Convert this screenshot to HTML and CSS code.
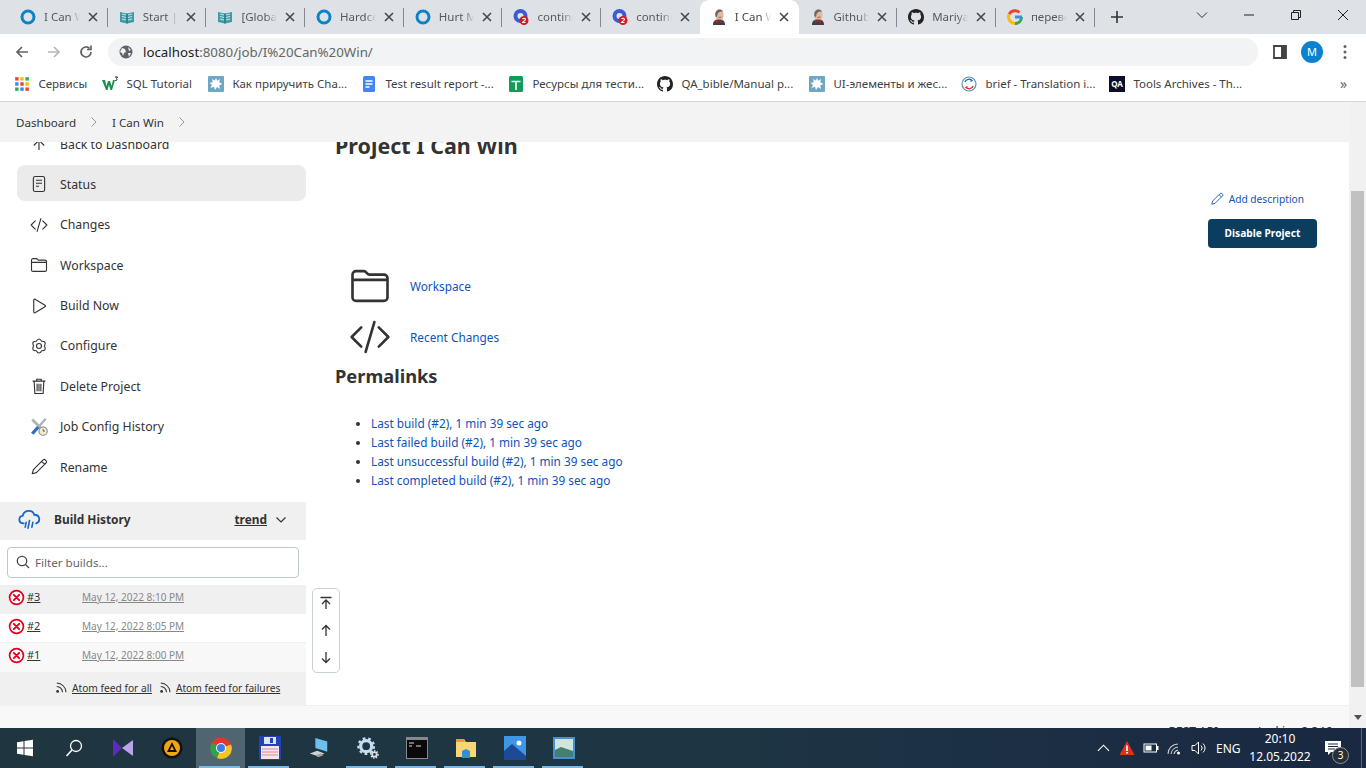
FILE: index.html
```html
<!DOCTYPE html>
<html lang="en">
  <head>
    <meta charset="UTF-8" />
    <title>I Can Win [Jenkins]</title>
    <link rel="stylesheet" href="styles.css">
  </head>
  <body>
    <svg class="sprite">
      <symbol id="ring" viewBox="0 0 16 16"><circle cx="8" cy="8" r="6" fill="none" stroke="#0a84c6" stroke-width="3"/></symbol>
      <symbol id="book" viewBox="0 0 16 16"><path d="M1 3l7 1.500L15 3v10l-7 1.500L1 13z" fill="#3f9aa8"/><path d="M3 5l4 1M3 7.500l4 1M3 10l4 1M13 5l-4 1M13 7.500l-4 1M13 10l-4 1" stroke="#cfe8ea" stroke-width="1"/><path d="M8 4.500v10" stroke="#1f6d78"/></symbol>
      <symbol id="contin" viewBox="0 0 16 16"><circle cx="7.500" cy="7" r="7" fill="#3b5bd6"/><circle cx="7.500" cy="7" r="3" fill="#dfe6fb"/><circle cx="11" cy="11.500" r="4.500" fill="#e0141e"/><path d="M9.500 10c.8-1 3-.8 3 .5 0 1-2.500 2-3 3h3" fill="none" stroke="#fff" stroke-width="1.100"/></symbol>
      <symbol id="jenkins" viewBox="0 0 16 16"><path d="M4.500 7c-.6-4 1.200-6.500 4-6.500S13 3 12.500 7l-.7 3.500H5z" fill="#e3b9a0"/><path d="M4.500 7.500C3.500 2.500 6 .2 9 .5 10.500.7 11.500 1.500 12 2.500 9.500 2 7 3 6.500 5.500L6 8z" fill="#6d6a69"/><path d="M7.500 8.500l3-.5" stroke="#9c6a55"/><path d="M2 16c0-4 1.800-5.500 6-5.500s6 1.500 6 5.500z" fill="#3a3f4a"/><path d="M5 10.800L8 12.300l3-1.500v3L8 12.800l-3 1z" fill="#c2211e"/></symbol>
      <symbol id="octo" viewBox="0 0 16 16"><path d="M8 0C3.580 0 0 3.580 0 8c0 3.540 2.290 6.530 5.470 7.590.4.07.55-.17.55-.38 0-.19-.01-.82-.01-1.490-2.010.37-2.530-.49-2.690-.94-.09-.23-.48-.94-.82-1.130-.28-.15-.68-.52-.01-.53.63-.01 1.080.58 1.230.82.72 1.210 1.870.87 2.330.66.07-.52.28-.87.51-1.070-1.780-.2-3.640-.89-3.640-3.950 0-.87.31-1.590.82-2.150-.08-.2-.36-1.020.08-2.120 0 0 .67-.21 2.200.82.64-.18 1.320-.27 2-.27.68 0 1.360.09 2 .27 1.530-1.040 2.200-.82 2.200-.82.44 1.100.16 1.920.08 2.120.51.56.82 1.270.82 2.150 0 3.070-1.870 3.750-3.650 3.950.29.25.54.73.54 1.480 0 1.070-.01 1.930-.01 2.200 0 .21.15.46.55.38A8.013 8.013 0 0016 8c0-4.420-3.580-8-8-8z" fill="#222"/></symbol>
      <symbol id="google" viewBox="0 0 16 16"><path d="M14.500 8c0 3.800-2.700 6.500-6.500 6.500" fill="none" stroke="#34a853" stroke-width="3"/><path d="M8 14.500A6.500 6.500 0 0 1 2.300 5" fill="none" stroke="#fbbc05" stroke-width="3"/><path d="M2.300 5A6.500 6.500 0 0 1 12.500 3.500" fill="none" stroke="#ea4335" stroke-width="3"/><path d="M8 8h7" stroke="#4285f4" stroke-width="3"/></symbol>
      <symbol id="splat" viewBox="0 0 16 16"><rect width="16" height="16" rx="1" fill="#6ea6c4"/><path d="M8 2l1.200 2.800L12 3l-.8 3.200L14.500 8l-3.300 1.300.8 3.700-3-2L7 14l-1-3.300L2.500 12l1.500-3.200L1.500 7l3.200-.8L4 3l2.800 1.500z" fill="#fff"/></symbol>
      <symbol id="close" viewBox="0 0 10 10"><path d="M1 1l8 8M9 1l-8 8" stroke="#45484c" stroke-width="1.600"/></symbol>
      <symbol id="folder" viewBox="0 0 24 24"><path d="M2 18.500V5.500A2 2 0 0 1 4 3.500h4.500c1.500 0 1.700 2 3.200 2H20a2 2 0 0 1 2 2v11a2 2 0 0 1-2 2H4a2 2 0 0 1-2-2zM2 8.500h20" fill="none" stroke="#333" stroke-width="1.500" stroke-linejoin="round"/></symbol>
      <symbol id="code" viewBox="0 0 24 24"><path d="M7 6.500L1.500 12 7 17.500M17 6.500l5.500 5.500-5.500 5.500M14.500 3.500l-5 17" fill="none" stroke="#333" stroke-width="1.500" stroke-linecap="round" stroke-linejoin="round"/></symbol>
      <symbol id="pencil" viewBox="0 0 24 24"><path d="M3 21l1.500-5.500L17.500 2.500a2 2 0 0 1 2.800 0l1.200 1.200a2 2 0 0 1 0 2.800L8.500 19.500zM15.500 4.500l4 4" fill="none" stroke="currentColor" stroke-width="1.500" stroke-linejoin="round"/></symbol>
      <symbol id="failed" viewBox="0 0 16 16"><circle cx="8" cy="8" r="6.500" fill="#fff" stroke="#e6001f" stroke-width="1.600"/><path d="M5.500 5.500l5 5M10.500 5.500l-5 5" stroke="#e6001f" stroke-width="1.800" stroke-linecap="round"/></symbol>
      <symbol id="rss" viewBox="0 0 16 16"><circle cx="3" cy="13" r="1.600" fill="#333"/><path d="M2 7.500a6.500 6.500 0 0 1 6.500 6.500M2 3.500A10.500 10.500 0 0 1 12.500 14" fill="none" stroke="#333" stroke-width="1.200"/></symbol>
    </svg>

    <div class="tabs">
      <div class="tab"><svg class="fav"><use href="#ring"/></svg><span class="tab-title">I Can Win</span><svg class="tab-close"><use href="#close"/></svg></div>
      <div class="tab"><svg class="fav"><use href="#book"/></svg><span class="tab-title">Start | IDE</span><svg class="tab-close"><use href="#close"/></svg></div>
      <div class="tab"><svg class="fav"><use href="#book"/></svg><span class="tab-title">[Global</span><svg class="tab-close"><use href="#close"/></svg></div>
      <div class="tab"><svg class="fav"><use href="#ring"/></svg><span class="tab-title">Hardcore</span><svg class="tab-close"><use href="#close"/></svg></div>
      <div class="tab"><svg class="fav"><use href="#ring"/></svg><span class="tab-title">Hurt Me</span><svg class="tab-close"><use href="#close"/></svg></div>
      <div class="tab"><svg class="fav"><use href="#contin"/></svg><span class="tab-title">continue</span><svg class="tab-close"><use href="#close"/></svg></div>
      <div class="tab tab-noline"><svg class="fav"><use href="#contin"/></svg><span class="tab-title">continue</span><svg class="tab-close"><use href="#close"/></svg></div>
      <div class="tab tab-active tab-noline"><svg class="fav"><use href="#jenkins"/></svg><span class="tab-title">I Can Win</span><svg class="tab-close"><use href="#close"/></svg></div>
      <div class="tab"><svg class="fav"><use href="#jenkins"/></svg><span class="tab-title">Github</span><svg class="tab-close"><use href="#close"/></svg></div>
      <div class="tab"><svg class="fav"><use href="#octo"/></svg><span class="tab-title">Mariya</span><svg class="tab-close"><use href="#close"/></svg></div>
      <div class="tab"><svg class="fav"><use href="#google"/></svg><span class="tab-title">перевод</span><svg class="tab-close"><use href="#close"/></svg></div>
      <svg class="new-tab" viewBox="0 0 14 14"><path d="M7 1v12M1 7h12" stroke="#333" stroke-width="1.600"/></svg>
      <div class="win-controls">
        <svg viewBox="0 0 12 12"><path d="M1 3.500l5 5 5-5" fill="none" stroke="#333"/></svg>
        <svg viewBox="0 0 12 12"><path d="M1 6h10" stroke="#222"/></svg>
        <svg viewBox="0 0 12 12"><path d="M1.500 3.500h7v7h-7zM3.500 3.500v-2h7v7h-2" fill="none" stroke="#222"/></svg>
        <svg viewBox="0 0 12 12"><path d="M1 1l10 10M11 1L1 11" stroke="#222"/></svg>
      </div>
    </div>

    <div class="toolbar">
      <svg class="nav-icon" viewBox="0 0 16 16"><path d="M14 8H3M8 3L3 8l5 5" fill="none" stroke="#5f6368" stroke-width="1.700"/></svg>
      <svg class="nav-icon" viewBox="0 0 16 16"><path d="M2 8h11M8 3l5 5-5 5" fill="none" stroke="#b4b7bb" stroke-width="1.700"/></svg>
      <svg class="nav-icon" viewBox="0 0 16 16"><path d="M13 8a5 5 0 1 1-1.500-3.600M13 1.500v4H9" fill="none" stroke="#5f6368" stroke-width="1.700"/></svg>
      <div class="omnibox">
        <svg class="globe" viewBox="0 0 14 14"><circle cx="7" cy="7" r="6.500" fill="#5f6368"/><path d="M3 3l3 1 1 3-2 1-1 3-1-3-2-1zM9 2l3 3-2 1zM9 8l3 0-2 4z" fill="#f1f3f4"/></svg>
        <span class="url"><b>localhost</b>:8080/job/I%20Can%20Win/</span>
      </div>
      <svg class="panel-icon" viewBox="0 0 14 14"><path d="M1 1h12v12H1z" fill="none" stroke="#444" stroke-width="1.800"/><path d="M8 1h5v12H8z" fill="#444"/></svg>
      <span class="avatar">M</span>
      <svg class="dots" viewBox="0 0 4 16"><circle cx="2" cy="2.500" r="1.500" fill="#5f6368"/><circle cx="2" cy="8" r="1.500" fill="#5f6368"/><circle cx="2" cy="13.500" r="1.500" fill="#5f6368"/></svg>
    </div>

    <div class="bookmarks">
      <div class="bm">
        <svg class="fav" viewBox="0 0 14 14"><path d="M1 1h3v3H1z" fill="#ea4335"/><path d="M5.500 1h3v3h-3z" fill="#fbbc05"/><path d="M10 1h3v3h-3z" fill="#34a853"/><path d="M1 5.500h3v3H1z" fill="#4285f4"/><path d="M5.500 5.500h3v3h-3z" fill="#ea4335"/><path d="M10 5.500h3v3h-3z" fill="#fbbc05"/><path d="M1 10h3v3H1z" fill="#34a853"/><path d="M5.500 10h3v3h-3z" fill="#4285f4"/><path d="M10 10h3v3h-3z" fill="#ea4335"/></svg>
        <span>Сервисы</span>
      </div>
      <div class="bm">
        <svg class="fav" viewBox="0 0 16 16"><path d="M0 4h3l1.500 6L6 5h2l1.500 5L11 4h2l-3 10H8.500L7 9l-1.500 5H4z" fill="#1b8f4d"/><path d="M13 1h2.500l-1 1.500c1 .5.5 2.500-1.200 2" fill="none" stroke="#222"/></svg>
        <span>SQL Tutorial</span>
      </div>
      <div class="bm"><svg class="fav"><use href="#splat"/></svg><span>Как приручить Cha...</span></div>
      <div class="bm">
        <svg class="fav" viewBox="0 0 16 16"><rect x="2" width="12" height="16" rx="1.500" fill="#4285f4"/><path d="M4.500 5h7M4.500 8h7M4.500 11h4" stroke="#fff" stroke-width="1.300"/></svg>
        <span>Test result report -...</span>
      </div>
      <div class="bm">
        <svg class="fav" viewBox="0 0 16 16"><rect x="1" width="14" height="16" rx="1.500" fill="#0f9d58"/><path d="M3.500 5.500h9M8 5.500V14" stroke="#fff" stroke-width="1.600"/></svg>
        <span>Ресурсы для тести...</span>
      </div>
      <div class="bm"><svg class="fav"><use href="#octo"/></svg><span>QA_bible/Manual p...</span></div>
      <div class="bm"><svg class="fav"><use href="#splat"/></svg><span>UI-элементы и жес...</span></div>
      <div class="bm">
        <svg class="fav" viewBox="0 0 16 16"><circle cx="8" cy="8" r="7" fill="#fff" stroke="#6d8ca8" stroke-width="1.200"/><path d="M4 6c1-3 5-3.500 7-1.500l-1.500 1" fill="none" stroke="#1f74c4" stroke-width="1.500"/><path d="M12 10c-1 3-5 3.500-7 1.500l1.500-1" fill="none" stroke="#e0352b" stroke-width="1.500"/></svg>
        <span>brief - Translation i...</span>
      </div>
      <div class="bm">
        <svg class="fav" viewBox="0 0 16 16"><rect width="16" height="16" fill="#0b0d2a"/><text x="8" y="11" class="qa-mark">QA</text></svg>
        <span>Tools Archives - Th...</span>
      </div>
      <span class="bm-more">»</span>
    </div>

    <div class="page">
      <div class="view">
        <div class="crumbs">
          <span>Dashboard</span>
          <svg class="crumb-sep" viewBox="0 0 8 12"><path d="M1.500 1.500L6 6l-4.500 4.500" fill="none" stroke="#999"/></svg>
          <span>I Can Win</span>
          <svg class="crumb-sep" viewBox="0 0 8 12"><path d="M1.500 1.500L6 6l-4.500 4.500" fill="none" stroke="#999"/></svg>
        </div>

        <div class="content">
          <aside class="sidebar">
            <div class="tasks">
              <div class="task">
                <svg class="task-icon" viewBox="0 0 24 24"><path d="M12 4v16M5 14l7-7 7 7" fill="none" stroke="#333" stroke-width="1.500"/></svg>
                <span>Back to Dashboard</span>
              </div>
              <div class="task task-current">
                <svg class="task-icon" viewBox="0 0 24 24"><rect x="4.500" y="2" width="15" height="20" rx="2.500" fill="none" stroke="#333" stroke-width="1.500"/><path d="M8 7h8M8 11h8M8 15h4" stroke="#333" stroke-width="1.500"/></svg>
                <span>Status</span>
              </div>
              <div class="task"><svg class="task-icon"><use href="#code"/></svg><span>Changes</span></div>
              <div class="task"><svg class="task-icon"><use href="#folder"/></svg><span>Workspace</span></div>
              <div class="task">
                <svg class="task-icon" viewBox="0 0 24 24"><path d="M5 4.500c0-1.500 1-2 2.300-1.300L20 11c1 .6 1 1.400 0 2L7.300 20.800C6 21.500 5 21 5 19.500z" fill="none" stroke="#333" stroke-width="1.500"/></svg>
                <span>Build Now</span>
              </div>
              <div class="task">
                <svg class="task-icon" viewBox="0 0 24 24"><path d="M8.350 5.680Q12-.5 15.650 5.680Q22.500 5.500 19.300 12Q22.500 18.500 15.650 18.320Q12 24.500 8.350 18.320Q1.500 18.500 4.700 12Q1.500 5.500 8.350 5.680z" fill="none" stroke="#333" stroke-width="1.500" stroke-linejoin="round"/><circle cx="12" cy="12" r="3.300" fill="none" stroke="#333" stroke-width="1.500"/></svg>
                <span>Configure</span>
              </div>
              <div class="task">
                <svg class="task-icon" viewBox="0 0 24 24"><path d="M3.500 5.500h17M9 5V3h6v2M5.500 5.500l1 16.500h11l1-16.500M9.500 9v10M12 9v10M14.500 9v10" fill="none" stroke="#333" stroke-width="1.500"/></svg>
                <span>Delete Project</span>
              </div>
              <div class="task">
                <svg class="task-icon" viewBox="0 0 24 24"><path d="M3 2l14 14" stroke="#a8b2ba" stroke-width="3.500"/><path d="M21 1l-8 9" stroke="#a8b2ba" stroke-width="3"/><path d="M11 12l-8 9" stroke="#2f6fc0" stroke-width="4.500"/><circle cx="17.500" cy="17.500" r="5.500" fill="#f5ecd0" stroke="#8c8c8c" stroke-width="1.500"/><path d="M17.500 14.500v3h2.500" fill="none" stroke="#555" stroke-width="1.200"/></svg>
                <span>Job Config History</span>
              </div>
              <div class="task"><svg class="task-icon task-pencil"><use href="#pencil"/></svg><span>Rename</span></div>
            </div>

            <div class="history-head">
              <svg class="cloud" viewBox="0 0 24 22"><path d="M6 15c-6 0-6-7-1-8C6 1 15 0 17 6c6 0 7 7 2 9" fill="none" stroke="#1469c7" stroke-width="1.900" stroke-linecap="round"/><path d="M8.500 14l-1 5M12 12l-1.500 8M15.500 14l-1 5" stroke="#1469c7" stroke-width="1.700" stroke-linecap="round"/></svg>
              <span class="history-title">Build History</span>
              <a class="trend">trend</a>
              <svg class="chev" viewBox="0 0 12 8"><path d="M1.500 1.500L6 6l4.500-4.500" fill="none" stroke="#333" stroke-width="1.200"/></svg>
            </div>
            <div class="filter-wrap">
              <div class="filter">
                <svg viewBox="0 0 14 14"><circle cx="6" cy="6" r="4.700" fill="none" stroke="#444" stroke-width="1.300"/><path d="M9.500 9.500L13 13" stroke="#444" stroke-width="1.300"/></svg>
                <span>Filter builds...</span>
              </div>
            </div>
            <div class="build build-a"><svg class="build-icon"><use href="#failed"/></svg><a class="build-no">#3</a><a class="build-date">May 12, 2022 8:10 PM</a></div>
            <div class="build build-b"><svg class="build-icon"><use href="#failed"/></svg><a class="build-no">#2</a><a class="build-date">May 12, 2022 8:05 PM</a></div>
            <div class="build build-c"><svg class="build-icon"><use href="#failed"/></svg><a class="build-no">#1</a><a class="build-date">May 12, 2022 8:00 PM</a></div>
            <div class="feeds">
              <svg><use href="#rss"/></svg><a>Atom feed for all</a>
              <svg class="feed-second"><use href="#rss"/></svg><a>Atom feed for failures</a>
            </div>
          </aside>

          <main class="main">
            <h1>Project I Can Win</h1>
            <div class="actions">
              <a class="add-desc"><svg><use href="#pencil"/></svg>Add description</a>
              <button class="disable-btn">Disable Project</button>
            </div>
            <div class="big-link"><svg><use href="#folder"/></svg><a>Workspace</a></div>
            <div class="big-link"><svg><use href="#code"/></svg><a>Recent Changes</a></div>
            <h2>Permalinks</h2>
            <ul class="permalinks">
              <li><a>Last build (#2), 1 min 39 sec ago</a></li>
              <li><a>Last failed build (#2), 1 min 39 sec ago</a></li>
              <li><a>Last unsuccessful build (#2), 1 min 39 sec ago</a></li>
              <li><a>Last completed build (#2), 1 min 39 sec ago</a></li>
            </ul>
          </main>

          <div class="scroll-tool">
            <svg viewBox="0 0 14 14"><path d="M1.500 1.500h11M7 13V4M3 8l4-4 4 4" fill="none" stroke="#333" stroke-width="1.300"/></svg>
            <svg viewBox="0 0 14 14"><path d="M7 13V2.500M3 6.500l4-4 4 4" fill="none" stroke="#333" stroke-width="1.300"/></svg>
            <svg viewBox="0 0 14 14"><path d="M7 1v10.500M3 7.500l4 4 4-4" fill="none" stroke="#333" stroke-width="1.300"/></svg>
          </div>
        </div>

        <div class="page-foot"><span>REST API</span><span>Jenkins 2.346</span></div>
      </div>

      <div class="scrollbar">
        <div class="thumb"></div>
        <svg class="scroll-arrow" viewBox="0 0 8 5"><path d="M0 0h8L4 5z" fill="#505050"/></svg>
      </div>
    </div>

    <div class="taskbar">
      <div class="task-btn">
        <svg viewBox="0 0 18 18"><path d="M1 3.200l6.500-1v6.300H1zM8.500 2l8.500-1.300v7.800H8.500zM1 9.500h6.500v6.300l-6.500-1zM8.500 9.500H17v7.800L8.500 16z" fill="#fff"/></svg>
      </div>
      <div class="task-btn">
        <svg viewBox="0 0 18 18"><circle cx="11" cy="7" r="5.500" fill="none" stroke="#fff" stroke-width="1.300"/><path d="M7 11l-5.500 6" stroke="#fff" stroke-width="1.500"/></svg>
      </div>
      <div class="task-btn">
        <svg class="task-lg" viewBox="0 0 22 22"><path d="M1 2l9 9-9 9z" fill="#5b2bc0"/><path d="M21 3l-11 8 11 8z" fill="#b9a3ea"/></svg>
      </div>
      <div class="task-btn">
        <svg class="task-lg" viewBox="0 0 22 22"><circle cx="11" cy="11" r="10.500" fill="#111"/><circle cx="11" cy="11" r="8" fill="#f3a60f"/><path d="M11 5l5 10H6zM11 9l-2 4h4z" fill="#111" fill-rule="evenodd"/></svg>
      </div>
      <div class="task-btn task-btn-active task-btn-open">
        <svg class="task-lg" viewBox="0 0 22 22"><circle cx="11" cy="11" r="10.500" fill="#e0392b"/><path d="M11 11L2 5.500A10.500 10.500 0 0 0 7 21z" fill="#2fa24a"/><path d="M11 11l-4 10A10.500 10.500 0 0 0 21 7.500z" fill="#f7c325"/><circle cx="11" cy="11" r="5" fill="#fff"/><circle cx="11" cy="11" r="4" fill="#3b7de8"/></svg>
      </div>
      <div class="task-btn task-btn-open">
        <svg class="task-lg" viewBox="0 0 22 24"><rect width="22" height="24" rx="1" fill="#2242b8"/><rect x="5" y="1" width="12" height="7" fill="#dfe4ee"/><rect x="11" y="2" width="3" height="5" fill="#2242b8"/><rect x="2" y="10" width="18" height="13" fill="#f4e6e6"/><path d="M3 13h16M3 16h16M3 19h16" stroke="#e08a94"/></svg>
      </div>
      <div class="task-btn">
        <svg class="task-lg" viewBox="0 0 24 24"><path d="M8 1l13 4v11L8 12z" fill="#6dc0ee"/><path d="M2 18l8-3 8 3-7 3z" fill="#cfd3d6"/><path d="M8 20l6-2 3 2-6 2z" fill="#9da3a8"/></svg>
      </div>
      <div class="task-btn task-btn-open">
        <svg class="task-lg" viewBox="0 0 24 24"><circle cx="10" cy="10" r="6" fill="none" stroke="#c4ddf0" stroke-width="3.500"/><circle cx="10" cy="10" r="8.500" fill="none" stroke="#c4ddf0" stroke-width="2.500" stroke-dasharray="3 3"/><circle cx="19" cy="19" r="2.500" fill="none" stroke="#d7dde2" stroke-width="2"/><circle cx="19" cy="19" r="4" fill="none" stroke="#d7dde2" stroke-width="1.500" stroke-dasharray="1.500 1.500"/></svg>
      </div>
      <div class="task-btn task-btn-open">
        <svg class="task-lg" viewBox="0 0 22 24"><rect y="1" width="22" height="22" fill="#888"/><rect x="1" y="4" width="20" height="18" fill="#0a0a0a"/><path d="M3 7h5M3 10h3M10 10h5" stroke="#ddd"/></svg>
      </div>
      <div class="task-btn task-btn-open">
        <svg class="task-lg" viewBox="0 0 22 22"><path d="M1 2h8l2 3h10v15H1z" fill="#f7d774"/><path d="M1 2h8l1 3H1z" fill="#e2a522"/><path d="M7 21v-7l4-2 4 2v7z" fill="#2f8fd8"/></svg>
      </div>
      <div class="task-btn task-btn-open">
        <svg class="task-lg" viewBox="0 0 22 24"><rect width="22" height="24" fill="#3f95e6"/><path d="M0 24V15l8-7 14 12v4z" fill="#1d4a94"/><circle cx="15" cy="7" r="2.500" fill="#fff"/></svg>
      </div>
      <div class="task-btn task-btn-open">
        <svg class="task-lg" viewBox="0 0 22 22"><rect width="22" height="22" fill="#4a90d0"/><rect x="2" y="2" width="18" height="18" fill="#cfe6df"/><path d="M2 13l6-3 12 4v6H2z" fill="#46806c"/></svg>
      </div>

      <div class="tray">
        <svg class="tray-chev" viewBox="0 0 14 8"><path d="M1 7l6-6 6 6" fill="none" stroke="#fff" stroke-width="1.200"/></svg>
        <svg class="tray-icon" viewBox="0 0 16 16"><path d="M8 1l7.500 14H.5z" fill="#e0301e"/><path d="M8 5.500V11M8 12v1.500" stroke="#fff" stroke-width="1.700"/></svg>
        <svg class="tray-icon" viewBox="0 0 16 10"><rect x="1" y="1" width="12.500" height="8" fill="none" stroke="#fff"/><rect x="2.500" y="2.500" width="6" height="5" fill="#fff"/><rect x="14" y="3" width="1.500" height="4" fill="#fff"/></svg>
        <svg class="tray-icon" viewBox="0 0 16 16"><path d="M1 14a10 10 0 0 1 10-10M4 14a8 8 0 0 1 7-7M7 14a5 5 0 0 1 4-4" fill="none" stroke="#c9ced4" stroke-width="1.100"/><circle cx="11.500" cy="13" r="1.500" fill="#fff"/></svg>
        <svg class="tray-icon" viewBox="0 0 16 16"><path d="M1 5.500h3L7.500 2v12L4 10.500H1z" fill="none" stroke="#fff"/><path d="M10 5.500a3.500 3.500 0 0 1 0 5M12 3.500a6 6 0 0 1 0 9" fill="none" stroke="#fff"/></svg>
        <span class="tray-lang">ENG</span>
        <div class="clock"><span>20:10</span><span>12.05.2022</span></div>
        <div class="notif">
          <svg viewBox="0 0 16 15"><path d="M0 0h16v11H6l-3 3v-3H0z" fill="#fff"/><path d="M3 3h10M3 5.500h10M3 8h7" stroke="#1b2a42"/></svg>
          <span class="notif-count">3</span>
        </div>
      </div>
    </div>
  </body>
</html>
```

FILE: styles.css
```css
* {
  box-sizing: border-box;
}

body {
  margin: 0;
  width: 1366px;
  height: 768px;
  overflow: hidden;
  display: flex;
  flex-direction: column;
  font-family: "Noto Sans", Arial, sans-serif;
  color: #333;
  background: #fff;
}

.sprite {
  display: none;
}

/* browser chrome */
.tabs {
  height: 34px;
  flex: none;
  display: flex;
  align-items: stretch;
  padding-left: 9px;
  background: #dee1e6;
}

.tab {
  width: 98.7px;
  display: flex;
  align-items: center;
  padding: 0 10px 1px 11px;
  gap: 8px;
  font-size: 11.5px;
  color: #55595e;
  position: relative;
}

.tab::after {
  content: "";
  position: absolute;
  right: 0;
  top: 8px;
  height: 19px;
  width: 1px;
  background: #85888c;
}

.tab-noline::after {
  display: none;
}

.tab-active {
  background: #fff;
  border-radius: 9px 9px 0 0;
  color: #444;
}

.fav {
  width: 16px;
  height: 16px;
  flex: none;
}

.tab-title {
  flex: 1;
  overflow: hidden;
  white-space: nowrap;
  -webkit-mask-image: linear-gradient(to right, #000 70%, transparent);
  mask-image: linear-gradient(to right, #000 70%, transparent);
}

.tab-close {
  width: 10px;
  height: 10px;
  flex: none;
}

.new-tab {
  width: 14px;
  height: 14px;
  align-self: center;
  margin-left: 15px;
}

.win-controls {
  margin-left: auto;
  display: flex;
  align-items: center;
  padding: 0 17px 4px 0;
  gap: 35px;
}

.win-controls svg {
  width: 12px;
  height: 12px;
}

.toolbar {
  height: 34px;
  flex: none;
  display: flex;
  align-items: center;
  padding: 2px 0 0 14px;
  background: #fff;
}

.nav-icon {
  width: 16px;
  height: 16px;
  margin-right: 16px;
}

.omnibox {
  width: 1150px;
  height: 28px;
  margin-left: -2px;
  display: flex;
  align-items: center;
  gap: 10px;
  padding-left: 11px;
  border-radius: 14px;
  background: #f1f3f4;
}

.globe {
  width: 14px;
  height: 14px;
}

.url {
  font-size: 13.3px;
  color: #666;
}

.url b {
  font-weight: normal;
  color: #222;
}

.panel-icon {
  width: 14px;
  height: 14px;
  margin-left: 15px;
}

.avatar {
  width: 22px;
  height: 22px;
  margin-left: 14px;
  border-radius: 50%;
  background: #0b82d0;
  color: #fff;
  font-size: 11px;
  line-height: 22px;
  text-align: center;
}

.dots {
  width: 4px;
  height: 16px;
  margin-left: 20px;
}

.bookmarks {
  height: 34px;
  flex: none;
  display: grid;
  grid-template-columns: 88px 106px 153px 147px 149px 152px 152px 148px 234px 1fr;
  align-items: center;
  padding: 0 0 2px 14px;
  background: #fff;
  font-size: 11.5px;
  color: #3c4043;
  border-bottom: 1px solid #d6d6d6;
}

.bm {
  display: flex;
  align-items: center;
  gap: 8.4px;
  white-space: nowrap;
  overflow: hidden;
}

.bm-more {
  font-size: 14px;
  color: #666;
  margin-left: -3px;
}

.qa-mark {
  font-size: 8px;
  font-weight: bold;
  fill: #fff;
  text-anchor: middle;
}

/* jenkins page */
.page {
  flex: 1;
  min-height: 0;
  display: flex;
}

.view {
  flex: 1;
  min-width: 0;
  display: flex;
  flex-direction: column;
}

.crumbs {
  height: 40px;
  flex: none;
  display: flex;
  align-items: center;
  padding-left: 16px;
  background: #f3f3f3;
  font-size: 11.6px;
  color: #333;
  position: relative;
  z-index: 2;
}

.crumb-sep {
  width: 8px;
  height: 12px;
  margin: 0 14px;
}

.content {
  flex: 1;
  min-height: 0;
  display: flex;
  position: relative;
  overflow: hidden;
}

.sidebar {
  width: 306px;
  flex: none;
  display: flex;
  flex-direction: column;
  font-size: 12.3px;
}

.tasks {
  margin: -17px 0 13px 17px;
}

.task {
  height: 36px;
  margin-bottom: 4.4px;
  display: flex;
  align-items: center;
  gap: 12px;
  padding: 2px 0 0 13px;
  border-radius: 8px;
  color: #333;
}

.task-current {
  background: #ebebeb;
}

.task-icon {
  width: 18px;
  height: 18px;
  flex: none;
}

.task-pencil {
  color: #333;
}

.history-head {
  height: 38px;
  flex: none;
  display: flex;
  align-items: center;
  padding: 0 0 3px 18px;
  background: #f0f0f0;
  font-size: 11.9px;
  font-weight: bold;
}

.cloud {
  width: 23px;
  height: 21px;
  margin-right: 13px;
}

.history-title {
  flex: 1;
}

.trend {
  text-decoration: underline;
}

.chev {
  width: 12px;
  height: 8px;
  margin: 2px 19px 0 8px;
}

.filter-wrap {
  padding: 7px 7px;
  height: 45px;
  flex: none;
  font-size: 11.6px;
}

.filter {
  height: 31px;
  display: flex;
  align-items: center;
  gap: 5px;
  padding-left: 8px;
  border: 1px solid #bcc8cc;
  border-radius: 4px;
  color: #666;
}

.filter svg {
  width: 14px;
  height: 14px;
}

.build {
  height: 29px;
  flex: none;
  display: flex;
  align-items: flex-start;
  padding: 4px 0 0 8px;
}

.build-a {
  background: #f0f0f0;
}

.build-b {
  background: #fff;
  border-bottom: 1px solid #f0f0f0;
}

.build-c {
  background: #f8f8f8;
}

.build-icon {
  width: 17px;
  height: 17px;
  flex: none;
}

.build-no {
  width: 55px;
  margin-left: 2px;
  text-decoration: underline;
  font-size: 11px;
}

.build-date {
  margin-top: 1px;
  color: #888;
  text-decoration: underline;
  font-size: 10px;
}

.feeds {
  flex: 1;
  display: flex;
  align-items: center;
  padding-left: 55px;
  background: #f0f0f0;
  font-size: 10.2px;
}

.feeds svg {
  width: 14px;
  height: 14px;
  margin-right: 3px;
  margin-bottom: 3px;
}

.feeds a {
  text-decoration: underline;
}

.feeds .feed-second {
  margin-left: 7px;
}

.main {
  flex: 1;
  min-width: 0;
  padding: 0 32px 0 29px;
}

h1 {
  margin: -11px 0 0;
  font-size: 21.5px;
  line-height: 30px;
  font-weight: bold;
}

.actions {
  display: flex;
  flex-direction: column;
  align-items: flex-end;
  margin-top: 30px;
}

.add-desc {
  display: flex;
  align-items: center;
  gap: 5px;
  margin-right: 13px;
  font-size: 10.2px;
  line-height: 16px;
  color: #1053b8;
}

.add-desc svg {
  width: 14px;
  height: 14px;
}

.disable-btn {
  width: 109px;
  height: 29px;
  margin-top: 12px;
  padding: 0 0 2px;
  border: none;
  border-radius: 4px;
  background: #0b3d5e;
  color: #fff;
  font-family: inherit;
  font-size: 10.2px;
  font-weight: bold;
}

.big-link {
  height: 51px;
  display: flex;
  align-items: center;
  gap: 19px;
  padding-left: 14px;
  font-size: 11.8px;
  color: #1053b8;
}

.big-link svg {
  width: 42px;
  height: 42px;
}

.actions + .big-link {
  margin-top: 12px;
}

h2 {
  margin: 1px 0 0;
  font-size: 18.3px;
  line-height: 26px;
  font-weight: bold;
}

.permalinks {
  margin: 25px 0 0;
  padding-left: 36px;
  font-size: 11.8px;
  line-height: 19px;
  color: #333;
}

.permalinks a {
  color: #1053b8;
}

.scroll-tool {
  position: absolute;
  left: 312px;
  top: 446px;
  width: 28px;
  height: 85px;
  display: flex;
  flex-direction: column;
  align-items: center;
  justify-content: space-around;
  border: 1px solid #c8d0d4;
  border-radius: 5px;
  background: #fff;
}

.scroll-tool svg {
  width: 14px;
  height: 14px;
}

.page-foot {
  height: 23px;
  flex: none;
  display: flex;
  justify-content: flex-end;
  gap: 40px;
  padding: 18px 17px 0 0;
  overflow: hidden;
  background: #f8f8f8;
  border-top: 1px solid #f0f0f0;
  font-size: 12px;
  line-height: 16px;
}

.scrollbar {
  width: 17px;
  flex: none;
  padding: 89px 2px 0;
  background: #f1f1f1;
  display: flex;
  flex-direction: column;
  align-items: center;
}

.thumb {
  width: 13px;
  height: 496px;
  background: #c1c1c1;
}

.scroll-arrow {
  width: 8px;
  height: 5px;
  margin-top: 28px;
}

/* windows taskbar */
.taskbar {
  height: 40px;
  flex: none;
  display: flex;
  background: linear-gradient(to right, #1f3540, #1e3644 50%, #1a2842);
}

.task-btn {
  width: 49px;
  display: flex;
  align-items: center;
  justify-content: center;
  position: relative;
}

.task-btn svg {
  width: 18px;
  height: 18px;
}

.task-btn .task-lg {
  width: 22px;
  height: 24px;
}

.task-btn-active {
  background: #4f6670;
}

.task-btn-open::after {
  content: "";
  position: absolute;
  left: 3px;
  right: 5px;
  bottom: 0;
  height: 2px;
  background: #76b9ed;
}

.tray {
  margin-left: auto;
  display: flex;
  align-items: center;
  color: #fff;
  margin-right: 4px;
  border-right: 1px solid #5a6678;
}

.tray-chev {
  width: 13px;
  height: 8px;
  margin-right: 9px;
}

.tray-icon {
  width: 16px;
  height: 16px;
  margin-right: 8px;
}

.tray-lang {
  width: 26px;
  margin: 0 3px 0 1px;
  font-size: 12px;
}

.clock {
  width: 70px;
  margin-right: 10px;
  display: flex;
  flex-direction: column;
  align-items: center;
  font-size: 12px;
  line-height: 18.5px;
}

.notif {
  width: 36px;
  position: relative;
  line-height: 0;
}

.notif svg {
  width: 16px;
  height: 15px;
}

.notif-count {
  position: absolute;
  left: 7px;
  top: 6px;
  width: 17px;
  height: 17px;
  border: 1px solid #8a929c;
  border-radius: 50%;
  background: #2a2e33;
  font-size: 10px;
  line-height: 15px;
  text-align: center;
}
```
